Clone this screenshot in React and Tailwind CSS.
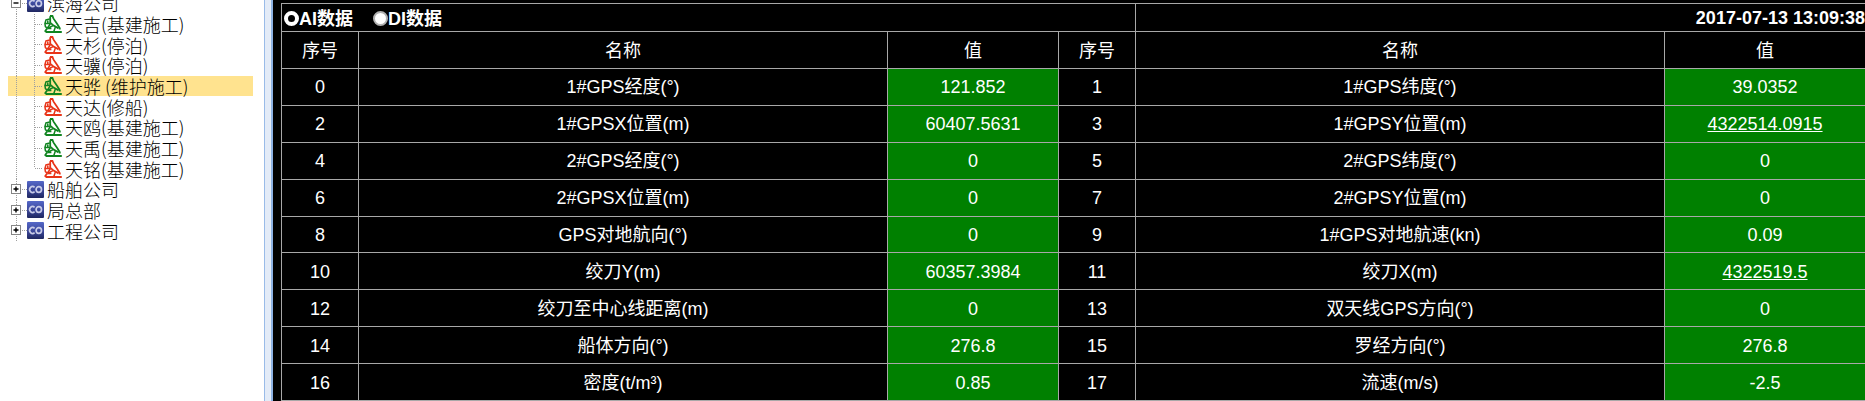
import React from "react";

const ships = [
  { name: "天吉(基建施工)", on: true },
  { name: "天杉(停泊)", on: false },
  { name: "天骥(停泊)", on: false },
  { name: "天骅 (维护施工)", on: true, selected: true },
  { name: "天达(修船)", on: false },
  { name: "天鸥(基建施工)", on: true },
  { name: "天禹(基建施工)", on: true },
  { name: "天铭(基建施工)", on: false, last: true },
];

const rows = [
  ["0", "1#GPS经度(°)", "121.852", "1", "1#GPS纬度(°)", "39.0352"],
  ["2", "1#GPSX位置(m)", "60407.5631", "3", "1#GPSY位置(m)", "4322514.0915"],
  ["4", "2#GPS经度(°)", "0", "5", "2#GPS纬度(°)", "0"],
  ["6", "2#GPSX位置(m)", "0", "7", "2#GPSY位置(m)", "0"],
  ["8", "GPS对地航向(°)", "0", "9", "1#GPS对地航速(kn)", "0.09"],
  ["10", "绞刀Y(m)", "60357.3984", "11", "绞刀X(m)", "4322519.5"],
  ["12", "绞刀至中心线距离(m)", "0", "13", "双天线GPS方向(°)", "0"],
  ["14", "船体方向(°)", "276.8", "15", "罗经方向(°)", "276.8"],
  ["16", "密度(t/m³)", "0.85", "17", "流速(m/s)", "-2.5"],
];

const linked = ["4322514.0915", "4322519.5"];

function Toggle({ open }) {
  return (
    <button aria-label={open ? "收起" : "展开"} className="w-4 shrink-0">
      <svg viewBox="0 0 16 21" className="block h-[21px] w-4" shapeRendering="crispEdges">
        <path d="M5.5 0V21" stroke="#a0a0a0" strokeDasharray="1 1" />
        <path d="M11 10.5H16" stroke="#a0a0a0" strokeDasharray="1 1" />
        <rect x="0.5" y="5.5" width="9" height="9" fill="#fff" stroke="#858585" />
        <path d={open ? "M2.5 10H7.5" : "M2.5 10H7.5M5 7.5V12.5"} stroke="#000" shapeRendering="auto" strokeWidth="1.4" />
      </svg>
    </button>
  );
}

function CompanyIcon() {
  return (
    <svg viewBox="0 0 17 17" className="h-[17px] w-[17px] shrink-0" aria-hidden="true">
      <defs>
        <linearGradient id="co" x1="0" y1="0" x2="0" y2="1">
          <stop offset="0" stopColor="#5568c8" />
          <stop offset="0.55" stopColor="#3a4698" />
          <stop offset="1" stopColor="#1f2760" />
        </linearGradient>
      </defs>
      <rect width="17" height="17" rx="1" fill="url(#co)" />
      <path d="M7.6 6.4A2.9 2.9 0 1 0 7.6 10.6" fill="none" stroke="#c9cce8" strokeWidth="1.7" />
      <ellipse cx="11.8" cy="8.5" rx="2.7" ry="2.8" fill="none" stroke="#c9cce8" strokeWidth="1.7" />
    </svg>
  );
}

function ShipIcon({ on }) {
  return (
    <svg viewBox="0 0 18 18" className={on ? "h-[18px] w-[18px] shrink-0 text-[#108420]" : "h-[18px] w-[18px] shrink-0 text-[#e83418]"} fill="none" stroke="currentColor" aria-hidden="true">
      <path d="M6 1L8.4 0.8L9.4 3.4L13.2 9L15.8 13.2V14.6" strokeWidth="1.8" />
      <path d="M6.2 1.2V7.6L9.6 10.6L14.6 13.4" strokeWidth="1.8" />
      <path d="M5.8 4L2 4.8L0.9 8.6L1.4 11.6L3.4 13.4M1.2 8.4H6.2M3.8 4.8V8.4M3.6 12.6L6.4 8.8" strokeWidth="1.5" />
      <path d="M3.4 13.2L9.2 10.6M11.4 12L9.8 16.6M3.2 13.4H7.4" strokeWidth="1.5" />
      <path d="M0.8 16.8L3 13.4M1.6 17H17.8" strokeWidth="1.8" />
    </svg>
  );
}

function Company({ name, open, children }) {
  return (
    <>
      <li className="flex items-center pl-[11px]">
        <Toggle open={open} />
        <CompanyIcon />
        <span className="pl-[3px]">{name}</span>
      </li>
      {children}
    </>
  );
}

function Ship({ ship }) {
  return (
    <li className={ship.selected ? "ml-2 mr-[11px] flex items-center bg-[#ffe38f] pl-2" : "ml-2 mr-[11px] flex items-center pl-2"}>
      <svg viewBox="0 0 28 21" className="block h-[21px] w-7 shrink-0" shapeRendering="crispEdges" aria-hidden="true">
        <path d="M0.5 0V21" stroke="#a0a0a0" strokeDasharray="1 1" />
        <path d={ship.last ? "M18.5 0V10" : "M18.5 0V21"} stroke="#a0a0a0" strokeDasharray="1 1" />
        <path d="M19 10.5H27" stroke="#a0a0a0" strokeDasharray="1 1" />
      </svg>
      <ShipIcon on={ship.on} />
      <span className="pl-[3px]">{ship.name}</span>
    </li>
  );
}

export default function App() {
  return (
    <div className="flex h-screen overflow-hidden bg-black">
      <nav aria-label="公司" className="w-[264px] shrink-0 overflow-hidden bg-white">
        <ul className="-mt-[7px] grid h-[248px] auto-rows-fr whitespace-nowrap font-['Noto_Sans_CJK_SC',sans-serif] text-[18px] leading-5 font-light text-black">
          <Company name="滨海公司" open>
            {ships.map((s) => (
              <Ship key={s.name} ship={s} />
            ))}
          </Company>
          <Company name="船舶公司" />
          <Company name="局总部" />
          <Company name="工程公司" />
        </ul>
      </nav>
      <div className="w-[9px] shrink-0 border-r-2 border-l border-r-[#8db2e3] border-l-[#99bbe8] bg-[#e3ebf7]" />
      <main className="-mr-px min-w-0 flex-1 pt-[3px] pl-2 font-['Liberation_Sans','Noto_Sans_CJK_SC',sans-serif] text-[18px] leading-6 text-white">
        <table className="h-[398px] w-full table-fixed border-collapse text-center">
          <colgroup>
            <col className="w-[77px]" />
            <col />
            <col className="w-[171px]" />
            <col className="w-[77px]" />
            <col />
            <col className="w-[201px]" />
          </colgroup>
          <thead>
            <tr className="h-7">
              <th colSpan={4} className="border border-[#a8a8a8] p-0 text-left">
                <div className="flex items-center gap-5 pt-0.5 pl-0.5">
                  <label className="flex items-center">
                    <input type="radio" name="kind" defaultChecked className="h-[15px] w-[15px] appearance-none rounded-full border-2 border-[#b0b0b0] bg-white checked:border-4 checked:border-white checked:bg-black" />
                    AI数据
                  </label>
                  <label className="flex items-center">
                    <input type="radio" name="kind" className="h-[15px] w-[15px] appearance-none rounded-full border-2 border-[#b0b0b0] bg-white checked:border-4 checked:border-white checked:bg-black" />
                    DI数据
                  </label>
                </div>
              </th>
              <th colSpan={2} className="border border-[#a8a8a8] p-0 text-right">2017-07-13 13:09:38</th>
            </tr>
            <tr className="h-[37px]">
              {["序号", "名称", "值", "序号", "名称", "值"].map((h, i) => (
                <th key={i} className="border border-[#a8a8a8] p-0 pt-0.5 font-normal">{h}</th>
              ))}
            </tr>
          </thead>
          <tbody>
            {rows.map((r) => (
              <tr key={r[0]} className="h-9">
                {r.map((c, i) => (
                  <td key={i} className={i % 3 === 2 ? "border border-[#a8a8a8] bg-[#008000] p-0 pt-px" : "border border-[#a8a8a8] p-0 pt-px"}>
                    {linked.includes(c) ? <a href="#value" className="underline">{c}</a> : c}
                  </td>
                ))}
              </tr>
            ))}
          </tbody>
        </table>
      </main>
    </div>
  );
}
